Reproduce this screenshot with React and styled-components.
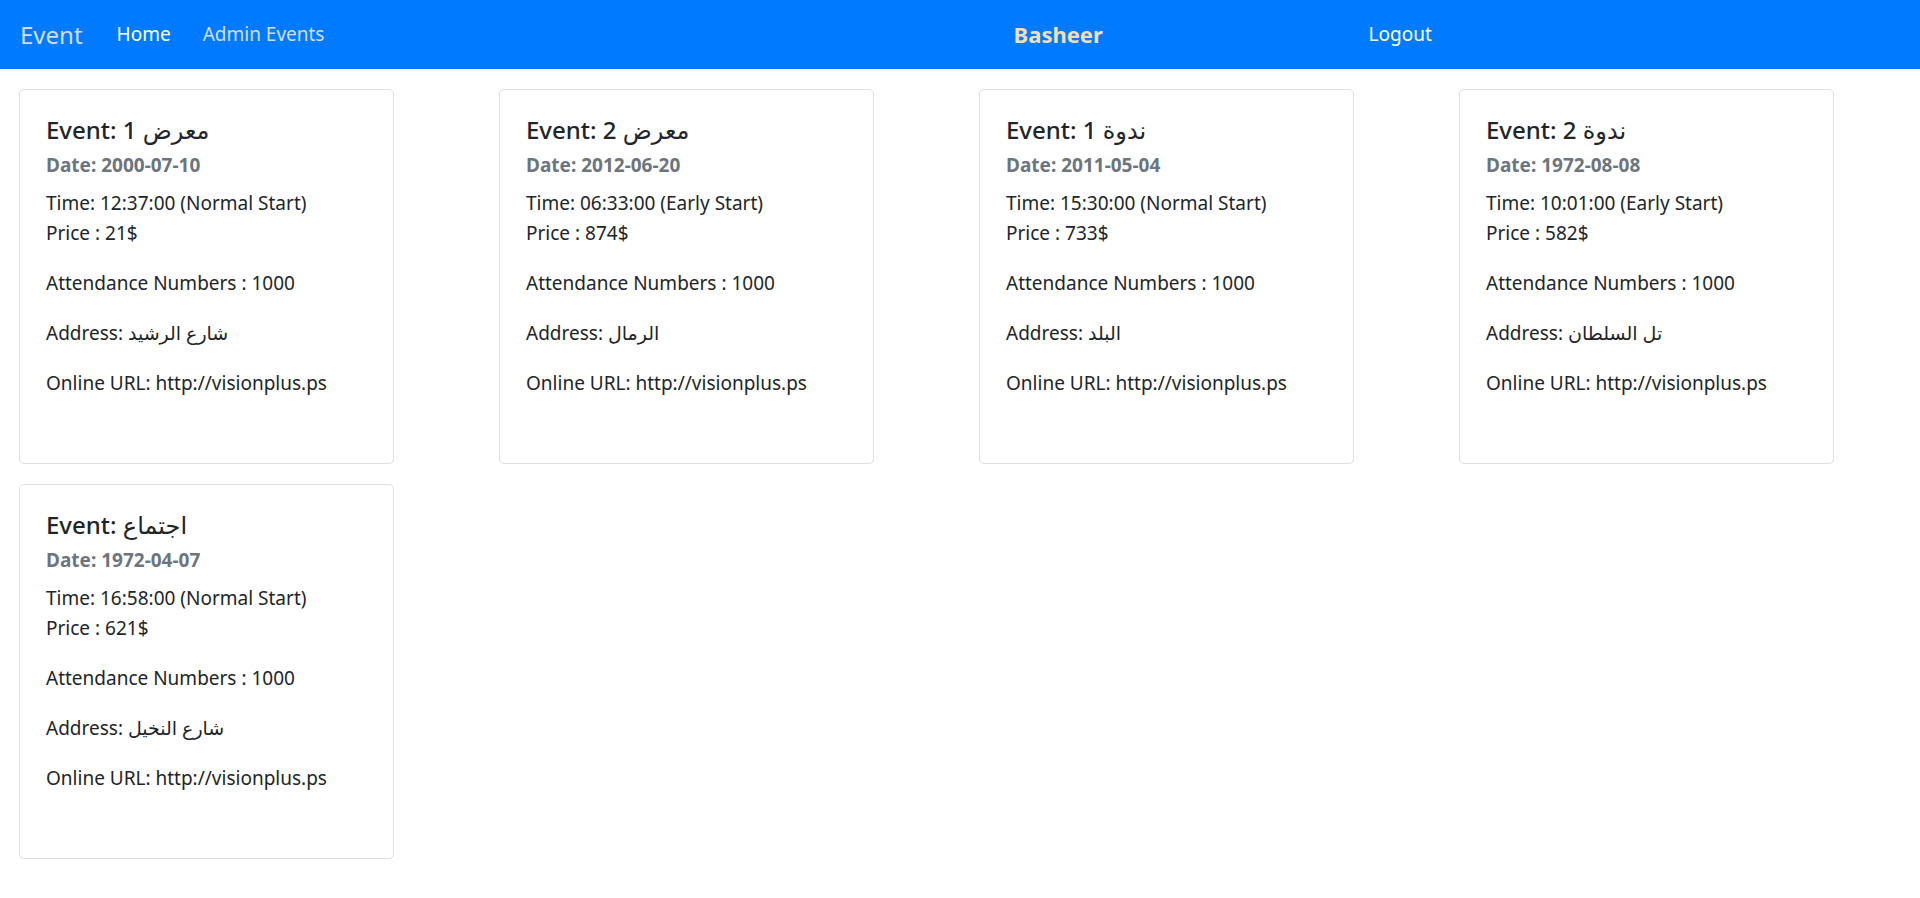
import React from "react";
import styled, { createGlobalStyle } from "styled-components";

const GlobalStyle = createGlobalStyle`
  body {
    margin: 0;
    font-family: "Segoe UI", "Noto Sans", "DejaVu Sans", sans-serif;
    font-size: 20px;
    line-height: 1.5;
    color: #212529;
    background: #fff;
  }
`;

const Navbar = styled.nav`
  height: 69px;
  background-color: #007bff;
  display: flex;
  align-items: center;
  padding: 0 20px;
  box-sizing: border-box;
`;

const Brand = styled.a`
  font-size: 24px;
  color: #d8dbe9;
  margin-right: 34px;
  text-decoration: none;
`;

const NavList = styled.div`
  display: flex;
  align-items: center;
  gap: 32px;
  width: 897px;
`;

const NavLink = styled.a`
  font-size: 19px;
  color: ${(p) => (p.$active ? "#fff" : "#d8dbe9")};
  text-decoration: none;
`;

const UserName = styled.span`
  font-size: 22px;
  font-weight: 700;
  color: #f5deb3;
  width: 355px;
`;

const Logout = styled.a`
  font-size: 19px;
  color: #fff;
  text-decoration: none;
`;

const Grid = styled.div`
  display: grid;
  grid-template-columns: repeat(4, 480px);
  row-gap: 20px;
  padding: 20px 0 20px 19px;
`;

const Card = styled.div`
  width: 375px;
  height: 375px;
  box-sizing: border-box;
  border: 1px solid rgba(0, 0, 0, 0.125);
  border-radius: 5px;
  padding: 26px 26px;
`;

const Title = styled.h5`
  font-size: 24px;
  font-weight: 500;
  line-height: 1.2;
  margin: 0 0 9px;
`;

const Subtitle = styled.h6`
  font-size: 19px;
  font-weight: 700;
  line-height: 1.2;
  color: #6c757d;
  margin: 0 0 11px;
`;

const Text = styled.p`
  font-size: 19px;
  line-height: 30px;
  margin: 0 0 20px;
`;

const events = [
  { name: "معرض 1", date: "2000-07-10", time: "12:37:00", start: "Normal Start", price: 21, address: "شارع الرشيد" },
  { name: "معرض 2", date: "2012-06-20", time: "06:33:00", start: "Early Start", price: 874, address: "الرمال" },
  { name: "ندوة 1", date: "2011-05-04", time: "15:30:00", start: "Normal Start", price: 733, address: "البلد" },
  { name: "ندوة 2", date: "1972-08-08", time: "10:01:00", start: "Early Start", price: 582, address: "تل السلطان" },
  { name: "اجتماع", date: "1972-04-07", time: "16:58:00", start: "Normal Start", price: 621, address: "شارع النخيل" },
];

function EventCard({ ev }) {
  return (
    <Card>
      <Title>
        Event: <bdi>{ev.name}</bdi>
      </Title>
      <Subtitle>Date: {ev.date}</Subtitle>
      <Text>
        Time: {ev.time} ({ev.start})
        <br />
        Price : {ev.price}$
      </Text>
      <Text>Attendance Numbers : 1000</Text>
      <Text>
        Address: <bdi>{ev.address}</bdi>
      </Text>
      <Text>Online URL: http://visionplus.ps</Text>
    </Card>
  );
}

export default function App() {
  return (
    <>
      <GlobalStyle />
      <Navbar>
        <Brand href="#">Event</Brand>
        <NavList>
          <NavLink href="#" $active>
            Home
          </NavLink>
          <NavLink href="#">Admin Events</NavLink>
        </NavList>
        <UserName>Basheer</UserName>
        <Logout href="#">Logout</Logout>
      </Navbar>
      <Grid>
        {events.map((ev, i) => (
          <EventCard key={i} ev={ev} />
        ))}
      </Grid>
    </>
  );
}
